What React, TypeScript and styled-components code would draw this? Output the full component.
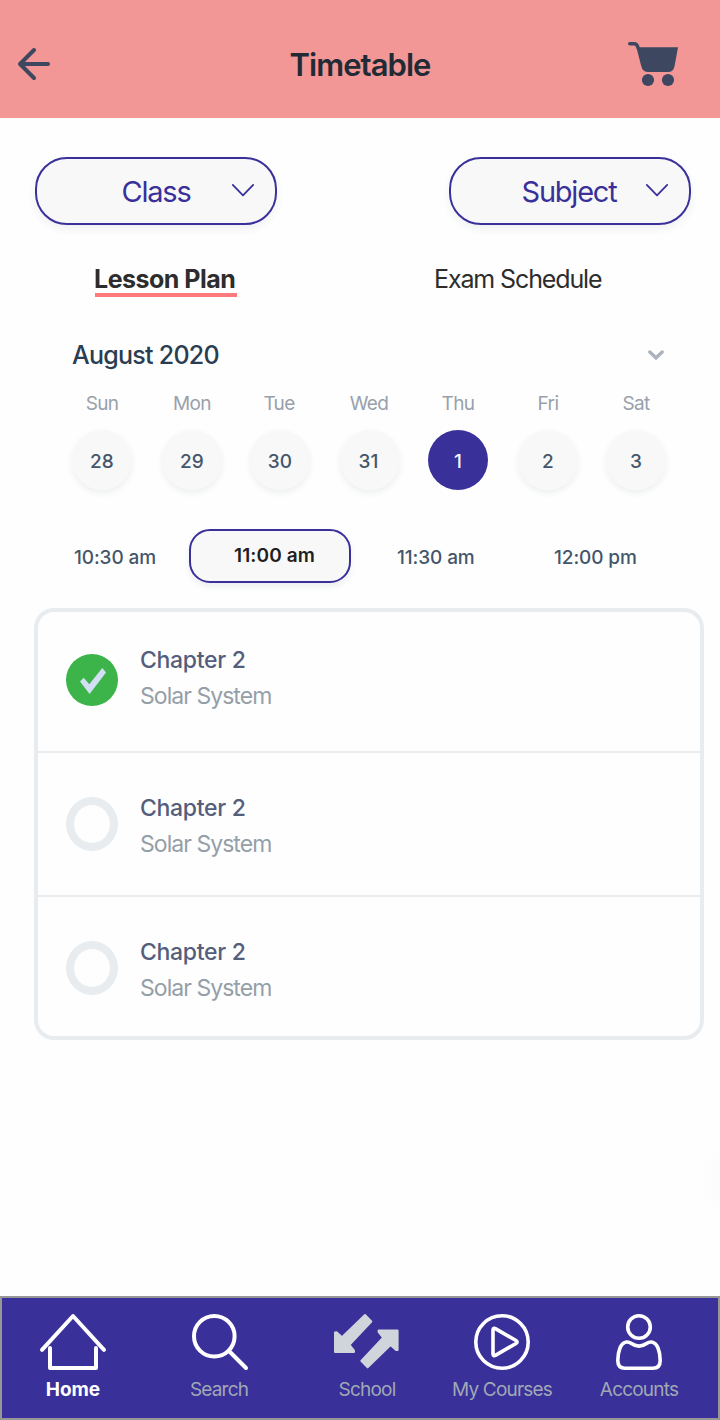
import React from "react";
import styled, { createGlobalStyle, css } from "styled-components";

const indigo = "#39309a";
const line = "#e8ecef";

const GlobalStyle = createGlobalStyle`
  *, *::before, *::after { box-sizing: border-box; }
  body { margin: 0; background: #fefefe; }
  button { font: inherit; color: inherit; padding: 0; border: 0; background: none; cursor: pointer; }
  svg { display: block; overflow: visible; }
`;

const Screen = styled.div`
  position: relative;
  display: flex;
  flex-direction: column;
  width: 720px;
  height: 1420px;
  overflow: hidden;
  font-family: Inter, "Liberation Sans", sans-serif;
`;

const Header = styled.header`
  display: grid;
  grid-template-columns: 1fr auto 1fr;
  align-items: center;
  height: 118px;
  padding-top: 10px;
  background: #f29795;
`;

const Title = styled.h1`
  margin: 0;
  padding: 2px 0 0 0;
  font-size: 31px;
  font-weight: 600;
  line-height: 40px;
  letter-spacing: -0.96px;
  color: #222b35;
`;

const BackButton = styled.button`
  justify-self: start;
  margin-left: 16px;
`;

const CartButton = styled.button`
  justify-self: end;
  margin-right: 40px;
`;

const Filters = styled.div`
  display: flex;
  justify-content: space-between;
  margin: 39px 29px 0 35px;
`;

const Select = styled.button`
  display: grid;
  grid-template-columns: minmax(0, 1fr) auto minmax(0, 1fr);
  align-items: center;
  width: 242px;
  height: 68px;
  border: 2px solid ${indigo};
  border-radius: 32px;
  background: #f8f8f8;
  box-shadow: 0 4px 8px rgba(44, 62, 80, 0.07);
  color: ${indigo};
  font-size: 29px;
  line-height: 36px;
  letter-spacing: -1.22px;
`;

const SelectLabel = styled.span<{ $wide?: boolean }>`
  grid-column: 2;
  padding-top: 2px;
  padding-right: ${(p) => (p.$wide ? "2px" : "0")};
`;

const SelectArrow = styled.svg`
  justify-self: end;
  margin-right: 20px;
`;

const Tabs = styled.div`
  display: flex;
  gap: 198px;
  margin-top: 40px;
  padding-left: 95px;
  color: #2d2d2d;
  font-size: 25px;
  line-height: 28px;
`;

const Tab = styled.button<{ $active?: boolean }>`
  height: 32px;
  line-height: 28px;
  text-align: left;
  white-space: nowrap;
  letter-spacing: -1.12px;
  border-bottom: 4px solid transparent;
  ${(p) =>
    p.$active &&
    css`
      width: 142px;
      margin-right: -1px;
      text-indent: -1px;
      font-weight: 700;
      letter-spacing: -0.5px;
      border-color: #ff7b7b;
    `}
`;

const MonthRow = styled.div`
  display: flex;
  align-items: center;
  justify-content: space-between;
  margin-top: 43px;
  padding: 0 54px 0 72px;
`;

const Month = styled.h2`
  margin: 0;
  font-size: 25px;
  font-weight: 500;
  line-height: 30px;
  letter-spacing: -0.74px;
  color: #2a3d51;
`;

const Week = styled.div`
  display: grid;
  grid-template-columns: 90px 90px 86px 94px 82px 98px 78px;
  margin: 22px 0 0 57px;
`;

const Day = styled.div`
  display: flex;
  flex-direction: column;
  align-items: center;
  gap: 14px;
`;

const DayName = styled.span<{ $narrow?: boolean }>`
  padding-right: ${(p) => (p.$narrow ? "2px" : "0")};
  font-size: 19px;
  line-height: 24px;
  letter-spacing: -0.65px;
  color: #98a1ab;
`;

const DayNumber = styled.button<{ $selected?: boolean; $narrow?: boolean }>`
  width: 60px;
  height: 60px;
  padding: 2px ${(p) => (p.$narrow ? "3px" : "0")} 0 0;
  border-radius: 50%;
  font-size: 19px;
  font-weight: 500;
  letter-spacing: 0.2px;
  color: ${(p) => (p.$selected ? "#f4f4f8" : "#43566a")};
  background: ${(p) => (p.$selected ? indigo : "#f8f8f8")};
  box-shadow: ${(p) => (p.$selected ? "none" : "0 3px 6px rgba(44, 62, 80, 0.08)")};
`;

const Times = styled.div`
  display: grid;
  grid-template-columns: 115px 208px 157px auto;
  align-items: center;
  justify-content: start;
  margin-top: 39px;
  padding-left: 74px;
`;

const Time = styled.button<{ $selected?: boolean }>`
  height: 54px;
  padding-top: 2px;
  text-align: left;
  white-space: nowrap;
  font-size: 19px;
  font-weight: 500;
  letter-spacing: -0.1px;
  color: #43566a;
  ${(p) =>
    p.$selected &&
    css`
      width: 162px;
      padding: 0 0 2px 9px;
      text-align: center;
      font-weight: 600;
      letter-spacing: 0.1px;
      color: #202020;
      border: 2px solid ${indigo};
      border-radius: 21px;
      background: #f8f8f8;
      box-shadow: 0 4px 6px rgba(44, 62, 80, 0.08);
    `}
`;

const Lessons = styled.ul`
  display: grid;
  grid-template-rows: 141px 144px 139px;
  margin: 25px 16px 0 34px;
  padding: 0;
  list-style: none;
  border: 4px solid ${line};
  border-radius: 20px;
`;

const Lesson = styled.li`
  display: flex;
  align-items: flex-start;
  gap: 22px;
  padding: 40px 28px 0;

  &:first-child { padding-top: 33px; }
  &:not(:last-child) { border-bottom: 2px solid ${line}; }
`;

const Ring = styled.span`
  flex: none;
  width: 52px;
  height: 54px;
  margin-top: 4px;
  border: 8px solid ${line};
  border-radius: 50%;
`;

const Done = styled.svg`
  flex: none;
  margin-top: 9px;
`;

const LessonText = styled.div`
  font-size: 23px;
  line-height: 36px;
  margin-top: -3px;
`;

const LessonTitle = styled.div`
  font-weight: 500;
  letter-spacing: -0.3px;
  color: #545d7b;
`;

const LessonTopic = styled.div`
  letter-spacing: -0.96px;
  color: #959fa8;
`;

const EdgeGlow = styled.div`
  position: absolute;
  left: 700px;
  top: 1132px;
  width: 96px;
  height: 96px;
  border-radius: 50%;
  background: radial-gradient(closest-side, #fbfbfb 50%, #fefefe);
`;

const Nav = styled.nav`
  display: grid;
  grid-template-columns: 142px 150px 146px 124px 150px;
  height: 124px;
  margin-top: auto;
  padding-top: 16px;
  border: 2px solid #979797;
  background: ${indigo};
`;

const NavItem = styled.button<{ $active?: boolean }>`
  display: flex;
  flex-direction: column;
  align-items: center;
  gap: 8px;
  white-space: nowrap;
  font-size: 19px;
  line-height: 24px;
  font-weight: ${(p) => (p.$active ? 700 : 400)};
  letter-spacing: ${(p) => (p.$active ? "-0.06px" : "-0.8px")};
  color: ${(p) => (p.$active ? "#fff" : "#a0a8b4")};
`;

const Glyph = styled.svg`
  fill: none;
  stroke: currentColor;
  stroke-linecap: round;
  stroke-linejoin: round;
`;

const NavGlyph = styled(Glyph)`
  stroke: #fff;
`;

const BackGlyph = styled(Glyph)`
  color: #3d475f;
`;

const days = [
  { name: "Sun", number: 28 },
  { name: "Mon", number: 29 },
  { name: "Tue", number: 30 },
  { name: "Wed", number: 31 },
  { name: "Thu", number: 1 },
  { name: "Fri", number: 2 },
  { name: "Sat", number: 3 },
];

const times = ["10:30 am", "11:00 am", "11:30 am", "12:00 pm"];

const lessons = [
  { title: "Chapter 2", topic: "Solar System", done: true },
  { title: "Chapter 2", topic: "Solar System", done: false },
  { title: "Chapter 2", topic: "Solar System", done: false },
];

const BackIcon = () => (
  <BackGlyph width="36" height="36" viewBox="0 0 36 36" strokeWidth="4">
    <path d="M32 18H4M18 4 4 18l14 14" />
  </BackGlyph>
);

const CartIcon = () => (
  <svg width="54" height="48" viewBox="0 0 54 48" fill="#3d475f">
    <path d="M3.7 3.7h4.5c2.6 0 3.4 1.7 3.9 4.2" fill="none" stroke="#3d475f" strokeWidth="3.4" strokeLinecap="round" />
    <path d="M10.4 7.3H52L48.6 26Q47.4 32 42 32H22.5Q16.5 32 15.2 26Z" />
    <circle cx="22" cy="40" r="6.1" />
    <circle cx="42" cy="40" r="6.1" />
  </svg>
);

const HomeIcon = () => (
  <NavGlyph width="66" height="56" viewBox="40 1314 66 56" strokeWidth="4">
    <path d="M42 1349.8 73 1316l31 33.8M50 1348v20h46v-20" />
  </NavGlyph>
);

const SearchIcon = () => (
  <NavGlyph width="56" height="56" viewBox="191 1314 56 56" strokeWidth="4">
    <circle cx="214.3" cy="1336.3" r="20.3" />
    <path d="m229 1351 17 17" />
  </NavGlyph>
);

const arrow = "M365 1315 371.3 1321.5 349.5 1344.8 354 1350.5V1352H335V1332.5L336.5 1332.3 342 1337.3Z";

const SchoolIcon = () => (
  <svg width="66" height="56" viewBox="334 1314 66 56" fill="#d0d5dc" stroke="#d0d5dc" strokeWidth="2" strokeLinejoin="round">
    <path d={arrow} />
    <path d={arrow} transform="rotate(180 366.3 1341.2)" />
  </svg>
);

const CoursesIcon = () => (
  <NavGlyph width="56" height="56" viewBox="474 1314 56 56" strokeWidth="3.6">
    <circle cx="502" cy="1342" r="26.2" />
    <path d="M493 1330.3Q493 1327.3 495.8 1328.9L516 1340.5Q518.3 1342 516 1343.5L495.8 1355.1Q493 1356.7 493 1353.7Z" />
  </NavGlyph>
);

const AccountsIcon = () => (
  <NavGlyph width="46" height="56" viewBox="616 1314 46 56" strokeWidth="3.6">
    <circle cx="639" cy="1327" r="11.3" />
    <path d="M631 1343.3Q639 1349 647 1343.3Q649 1341.8 651.5 1342C657.5 1342.5 660.2 1352 660.2 1360.5Q660.2 1368.2 653 1368.2H625Q617.8 1368.2 617.8 1360.5C617.8 1352 620.5 1342.5 626.5 1342Q629 1341.8 631 1343.3Z" />
  </NavGlyph>
);

const navItems = [
  { label: "Home", icon: <HomeIcon /> },
  { label: "Search", icon: <SearchIcon /> },
  { label: "School", icon: <SchoolIcon /> },
  { label: "My Courses", icon: <CoursesIcon /> },
  { label: "Accounts", icon: <AccountsIcon /> },
];

const Filter = ({ label, wide }: { label: string; wide?: boolean }) => (
  <Select>
    <SelectLabel $wide={wide}>{label}</SelectLabel>
    <SelectArrow width="24" height="14" viewBox="0 0 24 14" fill="none" stroke={indigo} strokeWidth="1.8">
      <path d="M1.8 .9 12 11.4 22.2 .9" strokeLinecap="round" strokeLinejoin="round" />
    </SelectArrow>
  </Select>
);

export default function App() {
  return (
    <Screen>
      <GlobalStyle />
      <Header>
        <BackButton aria-label="Back"><BackIcon /></BackButton>
        <Title>Timetable</Title>
        <CartButton aria-label="Cart"><CartIcon /></CartButton>
      </Header>

      <Filters>
        <Filter label="Class" />
        <Filter label="Subject" wide />
      </Filters>

      <Tabs>
        <Tab $active>Lesson Plan</Tab>
        <Tab>Exam Schedule</Tab>
      </Tabs>

      <MonthRow>
        <Month>August 2020</Month>
        <svg width="20" height="12" viewBox="0 0 20 12" fill="none" stroke="#aab3be" strokeWidth="3.4">
          <path d="m3.8 3 6.2 5.8L16.2 3" strokeLinecap="round" />
        </svg>
      </MonthRow>

      <Week>
        {days.map((d) => (
          <Day key={d.name}>
            <DayName $narrow={d.name === "Tue" || d.name === "Wed"}>{d.name}</DayName>
            <DayNumber $selected={d.name === "Thu"} $narrow={d.number === 31}>{d.number}</DayNumber>
          </Day>
        ))}
      </Week>

      <Times>
        {times.map((t) => (
          <Time key={t} $selected={t === "11:00 am"}>{t}</Time>
        ))}
      </Times>

      <Lessons>
        {lessons.map((l, i) => (
          <Lesson key={i}>
            {l.done ? (
              <Done width="52" height="52" viewBox="0 0 52 52">
                <circle cx="26" cy="26" r="26" fill="#3cb44a" />
                <path d="M14 27.5 17.7 23.8 23.3 30.2 36.3 14 40 18.6 23.6 40Z" fill="#d3dff4" />
              </Done>
            ) : (
              <Ring />
            )}
            <LessonText>
              <LessonTitle>{l.title}</LessonTitle>
              <LessonTopic>{l.topic}</LessonTopic>
            </LessonText>
          </Lesson>
        ))}
      </Lessons>

      <EdgeGlow />

      <Nav>
        {navItems.map((n) => (
          <NavItem key={n.label} $active={n.label === "Home"}>
            {n.icon}
            <span>{n.label}</span>
          </NavItem>
        ))}
      </Nav>
    </Screen>
  );
}
